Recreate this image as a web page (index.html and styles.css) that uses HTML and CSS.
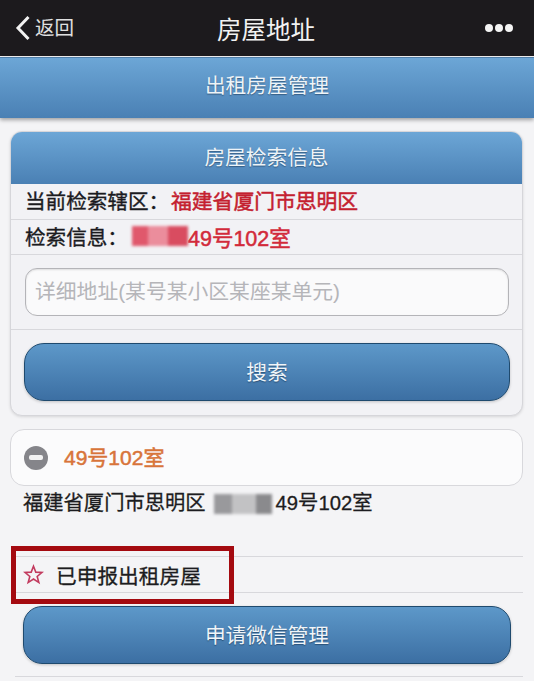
FILE: index.html
```html
<!DOCTYPE html>
<html lang="zh">
<head>
<meta charset="utf-8">
<title>房屋地址</title>
<link rel="stylesheet" href="styles.css">
</head>
<body>
<div class="page">
  <nav class="nav">
    <div class="nav-back">
      <svg class="chevron" viewBox="0 0 16 26"><path d="M13.5 2 L3 13 L13.5 24"/></svg>
      <span>返回</span>
    </div>
    <div class="nav-title">房屋地址</div>
    <div class="nav-more"><i></i><i></i><i></i></div>
  </nav>
  <header class="bar">出租房屋管理</header>
  <main class="content">
    <section class="card">
      <h2 class="card-head">房屋检索信息</h2>
      <div class="row row-a"><span class="label">当前检索辖区：</span><b class="red">福建省厦门市思明区</b></div>
      <div class="row row-b"><span class="label">检索信息：</span><span class="mosaic mosaic-red"><i></i><i></i><i></i></span><b class="red2">49号102室</b></div>
      <div class="row row-input"><div class="input">详细地址(某号某小区某座某单元)</div></div>
      <div class="row-btn"><div class="btn">搜索</div></div>
    </section>
    <section class="result">
      <span class="minus"><i></i></span>
      <b class="orange">49号102室</b>
    </section>
    <div class="address">福建省厦门市思明区<span class="mosaic mosaic-grey"><i></i><i></i><i></i></span><span class="addr-end">49号102室</span></div>
    <div class="status">
      <svg class="star" viewBox="0 0 24 24"><path d="M12 2.5 L14.6 9.3 L21.8 9.6 L16.2 14.2 L18.1 21.2 L12 17.2 L5.9 21.2 L7.8 14.2 L2.2 9.6 L9.4 9.3 Z"/></svg>
      <span>已申报出租房屋</span>
    </div>
    <div class="apply"><div class="btn btn-apply">申请微信管理</div></div>
    <div class="mark"></div>
  </main>
</div>
</body>
</html>
```
FILE: styles.css
```css
html, body { margin: 0; padding: 0; }
body {
  width: 534px;
  height: 681px;
  overflow: hidden;
  background: #f4f4f6;
  font-family: "Liberation Sans", "Noto Sans CJK SC", sans-serif;
}
.page { width: 534px; height: 681px; overflow: hidden; }
.nav {
  height: 56px;
  background: #1c1a1d;
  color: #f2f2f2;
  display: flex;
  align-items: center;
  justify-content: center;
  position: relative;
}
.nav-back {
  position: absolute;
  left: 15px;
  top: 15px;
  display: flex;
  align-items: center;
  gap: 4px;
  font-size: 19.5px;
  line-height: 26px;
  color: #e0e0e0;
}
.chevron { width: 16px; height: 26px; fill: none; stroke: #f2f2f2; stroke-width: 3; }
.nav-title { font-size: 24.5px; padding-top: 1px; margin-left: -2px; }
.nav-more {
  position: absolute;
  right: 21px;
  top: 24px;
  display: flex;
  gap: 2px;
}
.nav-more i { width: 8px; height: 8px; border-radius: 50%; background: #f4f4f4; }
.bar {
  height: 61px;
  margin-top: 1px;
  background: linear-gradient(#6ca6d6, #4a80b4);
  box-shadow: 0 2px 4px rgba(0,0,0,.35);
  border-top: 1px solid #4f7ea8;
  box-sizing: border-box;
  color: #eef4f8;
  font-size: 20.7px;
  line-height: 55px;
  text-align: center;
  text-shadow: 0 1px 1px rgba(30,60,90,.6);
}
.content { padding: 13px 11px 0 10px; position: relative; }
.card {
  border: 1px solid #d6d6da;
  border-radius: 12px;
  background: #f2f2f5;
  box-shadow: 0 1px 3px rgba(0,0,0,.12);
  overflow: hidden;
}
.card-head {
  margin: 0;
  height: 52px;
  background: linear-gradient(#6ca6d6, #4a80b4);
  color: #eef4f8;
  font-size: 20.7px;
  font-weight: 400;
  line-height: 52px;
  text-align: center;
  text-shadow: 0 1px 1px rgba(30,60,90,.6);
}
.row { display: flex; align-items: center; padding-left: 14px; border-bottom: 1px solid #d8d8dc; font-size: 20.6px; color: #1b1b1f; }
.row-a { height: 36px; padding-bottom: 3px; box-sizing: border-box; }
.row-b { height: 35px; padding-bottom: 2px; box-sizing: border-box; }
.label { -webkit-text-stroke: .35px #1b1b1f; white-space: nowrap; }
.row-a .label { width: 146px; }
.row-b .label { width: 107px; }
.red, .red2 { font-weight: 400; font-size: 20.8px; white-space: nowrap; -webkit-text-stroke: .5px currentColor; }
.red { color: #c4202f; }
.red2 { color: #d22a3a; font-size: 21.5px; }
.mosaic { display: inline-flex; height: 20px; filter: blur(1.5px); }
.mosaic i { display: block; }
.mosaic-red { width: 56px; background: #eba3ae; }
.mosaic-red i:nth-child(1) { width: 16px; background: #e0586c; }
.mosaic-red i:nth-child(2) { width: 20px; background: #eb8d9c; }
.mosaic-red i:nth-child(3) { width: 20px; background: #d94c60; }
.row-input { height: 74px; }
.input {
  width: 482px;
  height: 46px;
  border: 1px solid #b4b4b8;
  border-radius: 12px;
  background: #fafafb;
  box-shadow: inset 0 1px 2px rgba(0,0,0,.12);
  color: #b5b5b9;
  font-size: 20.8px;
  line-height: 46px;
  text-indent: 9px;
  white-space: nowrap;
}
.row-btn { padding: 13px 12px 14px 13px; }
.btn {
  height: 58px;
  box-sizing: border-box;
  border: 1px solid #1f4a6e;
  border-radius: 20px;
  background: linear-gradient(#5d98c9, #3c6fa3);
  box-shadow: 0 1px 3px rgba(0,0,0,.2);
  color: #f0f5f9;
  font-size: 20.7px;
  line-height: 58px;
  text-align: center;
  text-shadow: 0 1px 1px rgba(20,50,80,.6);
}
.result {
  margin-top: 13px;
  height: 57px;
  box-sizing: border-box;
  border: 1px solid #d8d8dc;
  border-radius: 14px;
  background: #fbfbfc;
  display: flex;
  align-items: center;
  padding-left: 13px;
  gap: 16px;
}
.minus {
  width: 24px;
  height: 24px;
  border-radius: 50%;
  background: #85858a;
  display: flex;
  align-items: center;
  justify-content: center;
}
.minus i { width: 14px; height: 5px; border-radius: 2px; background: #f2f2f2; }
.orange { color: #d8743a; font-size: 21px; font-weight: 400; -webkit-text-stroke: .5px currentColor; margin-top: -4px; }
.address {
  height: 71px;
  box-sizing: border-box;
  padding: 5px 0 0 8px;
  border-bottom: 1px solid #d8d8dc;
  margin-left: 5px;
  font-size: 20.3px;
  line-height: 24px;
  color: #1c1c20;
  display: flex;
  align-items: flex-start;
  white-space: nowrap;
  -webkit-text-stroke: .3px currentColor;
}
.addr-end { margin-left: 4px; }
.mosaic-grey { width: 58px; margin: 3px 0 0 8px; background: #c9c9cc; }
.mosaic-grey i:nth-child(1) { width: 18px; background: #99999c; }
.mosaic-grey i:nth-child(2) { width: 24px; background: #c2c2c4; }
.mosaic-grey i:nth-child(3) { width: 16px; background: #8a8a8d; }
.status {
  height: 36px;
  box-sizing: border-box;
  border-bottom: 1px solid #d8d8dc;
  margin-left: 5px;
  padding-left: 8px;
  display: flex;
  align-items: center;
  gap: 12px;
  font-size: 20.7px;
  color: #1c1c20;
  -webkit-text-stroke: .3px currentColor;
}
.star { width: 21px; height: 21px; fill: none; stroke: #c23a5e; stroke-width: 1.8; }
.apply {
  margin-left: 5px;
  padding: 13px 12px 13px 8px;
  height: 84px;
  box-sizing: border-box;
  border-bottom: 1px solid #d8d8dc;
}
.btn-apply { border-radius: 19px; }
.mark {
  position: absolute;
  left: 11px;
  top: 428px;
  width: 223px;
  height: 58px;
  box-sizing: border-box;
  border: 5px solid #a40a10;
}
```
